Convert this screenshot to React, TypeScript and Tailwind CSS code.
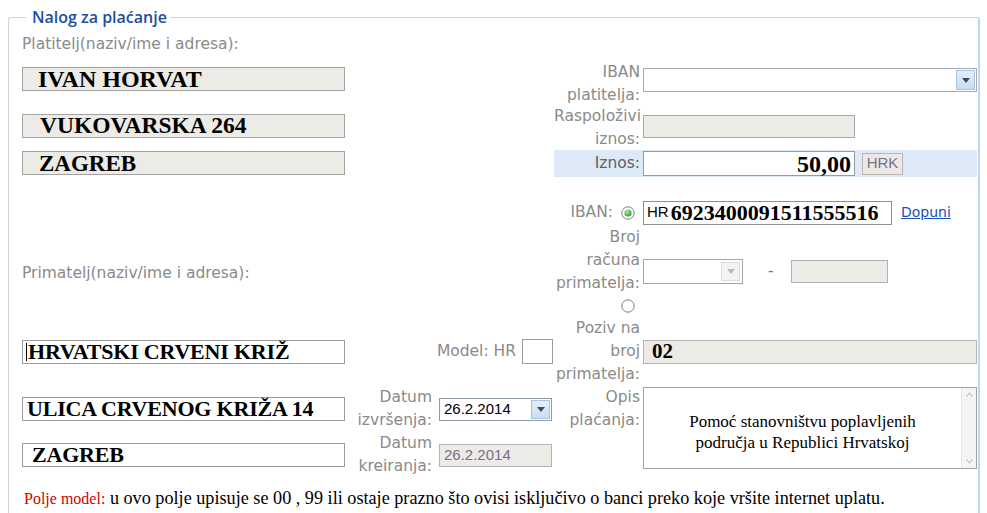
import type { ReactNode } from "react";

const labelCls =
  "font-['DejaVu_Sans',sans-serif] text-[15.5px] leading-[22.7px] text-[#8a8a8a]";
const serifCls = "font-['Liberation_Serif','Times_New_Roman',serif] text-black";
const arialCls = "font-['Liberation_Sans',Arial,sans-serif]";

function Arrow({ muted = false }: { muted?: boolean }) {
  return (
    <svg width="8" height="5" viewBox="0 0 8 5">
      <path d="M0 0h8L4 5z" fill={muted ? "#b8bcc2" : "#3f4b5e"} />
    </svg>
  );
}

function DropBtn({ muted = false }: { muted?: boolean }) {
  return (
    <div
      className={
        muted
          ? "flex h-full w-[19px] items-center justify-center border border-[#dcdcdc] bg-[#f3f3f3]"
          : "flex h-full w-[19px] items-center justify-center border border-[#a9c1e2] bg-[linear-gradient(#e4eefb,#cbdcf4)]"
      }
    >
      <Arrow muted={muted} />
    </div>
  );
}

function Radio({ checked = false }: { checked?: boolean }) {
  return (
    <svg width="14" height="14" viewBox="0 0 14 14">
      <circle cx="7" cy="7" r="6.2" fill="#fff" stroke="#7d7d7d" strokeWidth="1" />
      {checked && (
        <>
          <defs>
            <radialGradient id="g" cx="40%" cy="35%" r="70%">
              <stop offset="0" stopColor="#a6f0a0" />
              <stop offset="1" stopColor="#1f9a2a" />
            </radialGradient>
          </defs>
          <circle cx="7" cy="7" r="3.6" fill="url(#g)" />
        </>
      )}
    </svg>
  );
}

function NameBox({
  children,
  disabled = false,
  className = "",
}: {
  children: ReactNode;
  disabled?: boolean;
  className?: string;
}) {
  return (
    <div
      className={`flex h-[24px] w-[323px] items-center whitespace-nowrap border leading-none ${
        disabled ? "border-[#a3a3a3] bg-[#ecebe6]" : "border-[#9c9c9c] bg-white"
      } ${serifCls} ${className}`}
    >
      {children}
    </div>
  );
}

function RightLabel({ children, className = "" }: { children: ReactNode; className?: string }) {
  return (
    <div className={`${labelCls} self-center pr-[3px] text-right ${className}`}>
      {children}
    </div>
  );
}

export default function App() {
  return (
    <div className="h-[513px] w-[987px] overflow-hidden bg-white">
      <fieldset className="ml-[8px] mt-[6px] h-[560px] w-[972px] rounded-[3px] border border-[#cdd3d9] border-r-2 border-r-[#c3d5ea] pl-[13px]">
        <legend className="ml-[4px] pl-[6px] pr-[3px] font-['Open_Sans',sans-serif] text-[16px] font-semibold leading-[22px] text-[#1d4f9f]">
          Nalog za plaćanje
        </legend>

        <div className="grid grid-cols-[324px_93px_115px_89px_334px] grid-rows-[33px_45px_44px_27px_22px_27px_91px_69px_46px_46px]">
          {/* platitelj */}
          <div className={`${labelCls} col-start-1 row-start-1 self-center`}>
            Platitelj(naziv/ime i adresa):
          </div>
          <NameBox disabled className="col-start-1 row-start-2 mt-[6px] self-start pl-[15px] text-[24px] font-bold">
            IVAN HORVAT
          </NameBox>
          <NameBox disabled className="col-start-1 row-start-3 mt-[8px] self-start pl-[17px] text-[23.5px] font-bold">
            VUKOVARSKA 264
          </NameBox>
          <NameBox disabled className="col-start-1 row-start-4 mt-[1px] self-start pl-[16px] text-[23px] font-bold">
            ZAGREB
          </NameBox>

          {/* iban platitelja */}
          <RightLabel className="col-start-4 row-start-2">
            IBAN
            <br />
            platitelja:
          </RightLabel>
          <div className="col-start-5 row-start-2 mt-[7px] flex h-[24px] self-start justify-end border border-[#a3abb5] bg-white p-px">
            <DropBtn />
          </div>

          <RightLabel className="col-start-4 row-start-3">
            Raspoloživi
            <br />
            iznos:
          </RightLabel>
          <div className="col-start-5 row-start-3 mt-[9px] h-[23px] w-[212px] self-start border border-[#a9a9a9] bg-[#ecebe6]" />

          {/* iznos */}
          <div className="col-span-2 col-start-4 row-start-4 flex items-center bg-[#dde9f6]">
            <div className={`${labelCls} w-[89px] pr-[3px] text-right text-[#626262]`}>
              Iznos:
            </div>
            <div className={`flex h-[25px] w-[212px] items-center justify-end border border-[#9a9a9a] bg-white pr-[3px] text-[24px] font-bold leading-none ${serifCls}`}>
              50,00
            </div>
            <div className={`ml-[7px] flex h-[22px] w-[41px] items-center justify-center border border-[#b9b5b1] bg-[#ece9e5] text-[15px] text-[#7b6d8d] ${arialCls}`}>
              HRK
            </div>
          </div>

          {/* iban primatelja */}
          <div className="col-start-4 row-start-6 flex items-center justify-end gap-[8px] pr-[8px]">
            <span className={labelCls}>IBAN:</span>
            <Radio checked />
          </div>
          <div className="col-start-5 row-start-6 flex items-center">
            <div className="flex h-[24px] w-[249px] items-center border border-[#8f8f8f] bg-white pl-[3px]">
              <span className={`${arialCls} text-[15px] text-black`}>HR</span>
              <span className={`${serifCls} ml-[2px] text-[22px] font-bold leading-none`}>
                6923400091511555516
              </span>
            </div>
            <span className="ml-[9px] font-['DejaVu_Sans',sans-serif] text-[14px] text-[#1b4fc2] underline">
              Dopuni
            </span>
          </div>

          {/* primatelj */}
          <div className={`${labelCls} col-start-1 row-start-7 self-center pt-[4px]`}>
            Primatelj(naziv/ime i adresa):
          </div>
          <div className={`${labelCls} col-start-4 row-start-7 flex flex-col items-end self-center pr-[3px] text-right`}>
            <span>Broj</span>
            <span>računa</span>
            <span>primatelja:</span>
            <span className="flex h-[22.7px] items-center pr-[5px]">
              <Radio />
            </span>
          </div>
          <div className="col-start-5 row-start-7 flex items-center">
            <div className="flex h-[25px] w-[100px] justify-end border border-[#a5a5a5] bg-white p-[2px]">
              <DropBtn muted />
            </div>
            <span className={`${labelCls} ml-[25px] mr-[17px] text-[#777]`}>-</span>
            <div className="h-[23px] w-[97px] border border-[#b0b0b0] bg-[#ecebe6]" />
          </div>

          {/* poziv na broj */}
          <NameBox className="col-start-1 row-start-8 self-center pl-[3px] text-[22px] font-bold tracking-[-0.2px]">
            <span className="mr-[1px] h-[18px] w-px bg-black" />
            HRVATSKI CRVENI KRIŽ
          </NameBox>
          <div className="col-span-2 col-start-2 row-start-8 flex items-center justify-end gap-[6px] pr-px">
            <span className={`${labelCls} whitespace-nowrap`}>Model: HR</span>
            <div className="h-[25px] w-[31px] border border-[#9c9c9c] bg-white" />
          </div>
          <RightLabel className="col-start-4 row-start-8">
            Poziv na
            <br />
            broj
            <br />
            primatelja:
          </RightLabel>
          <div className={`col-start-5 row-start-8 flex h-[24px] items-center self-center border border-[#b3b3b3] bg-[#ecebe6] pl-[8px] text-[21px] font-bold leading-none ${serifCls}`}>
            02
          </div>

          {/* ulica / datum */}
          <NameBox className="col-start-1 row-start-9 self-center pl-[4px] text-[22px] font-bold tracking-[-0.2px]">
            ULICA CRVENOG KRIŽA 14
          </NameBox>
          <div className={`${labelCls} col-start-2 row-start-9 self-center pr-[7px] text-right`}>
            Datum
            <br />
            izvršenja:
          </div>
          <div className="col-start-3 row-start-9 flex h-[23px] w-[113px] items-center self-center border border-[#8e9aa8] bg-white p-px pl-[4px]">
            <span className={`${arialCls} flex-1 text-[15px] text-black`}>26.2.2014</span>
            <DropBtn />
          </div>
          <RightLabel className="col-start-4 row-start-9">
            Opis
            <br />
            plaćanja:
          </RightLabel>
          <div className="col-start-5 row-span-2 row-start-9 mt-px flex h-[82px] self-start border border-[#a0a0a0] bg-white">
            <div className={`flex-1 pt-[23px] text-center text-[17px] leading-[21px] ${serifCls}`}>
              Pomoć stanovništvu poplavljenih
              <br />
              područja u Republici Hrvatskoj
            </div>
            <div className="flex w-[15px] flex-col items-center justify-between border-l border-[#e6e6e6] bg-[#f4f4f4] py-[4px]">
              <svg width="7" height="5" viewBox="0 0 7 5">
                <path d="M0.5 4.5L3.5 1.2L6.5 4.5" fill="none" stroke="#c4c4c4" strokeWidth="1.2" />
              </svg>
              <svg width="7" height="5" viewBox="0 0 7 5">
                <path d="M0.5 0.5L3.5 3.8L6.5 0.5" fill="none" stroke="#c4c4c4" strokeWidth="1.2" />
              </svg>
            </div>
          </div>

          {/* zagreb / kreiranje */}
          <NameBox className="col-start-1 row-start-10 self-center pl-[9px] text-[22px] font-bold tracking-[-0.2px]">
            ZAGREB
          </NameBox>
          <div className={`${labelCls} col-start-2 row-start-10 self-center pr-[7px] text-right`}>
            Datum
            <br />
            kreiranja:
          </div>
          <div className={`col-start-3 row-start-10 flex h-[23px] w-[113px] items-center self-center border border-[#b4b4b4] bg-[#ecebe6] pl-[4px] text-[15px] text-[#7b6d8d] ${arialCls}`}>
            26.2.2014
          </div>
        </div>

        <p className={`mt-[10px] pl-[2px] text-[18.2px] leading-[20px] ${serifCls}`}>
          <span className="text-[16px] text-[#d40000]">Polje model:</span> u ovo polje upisuje se
          00 , 99 ili ostaje prazno što ovisi isključivo o banci preko koje vršite internet
          uplatu.
        </p>
      </fieldset>
    </div>
  );
}
